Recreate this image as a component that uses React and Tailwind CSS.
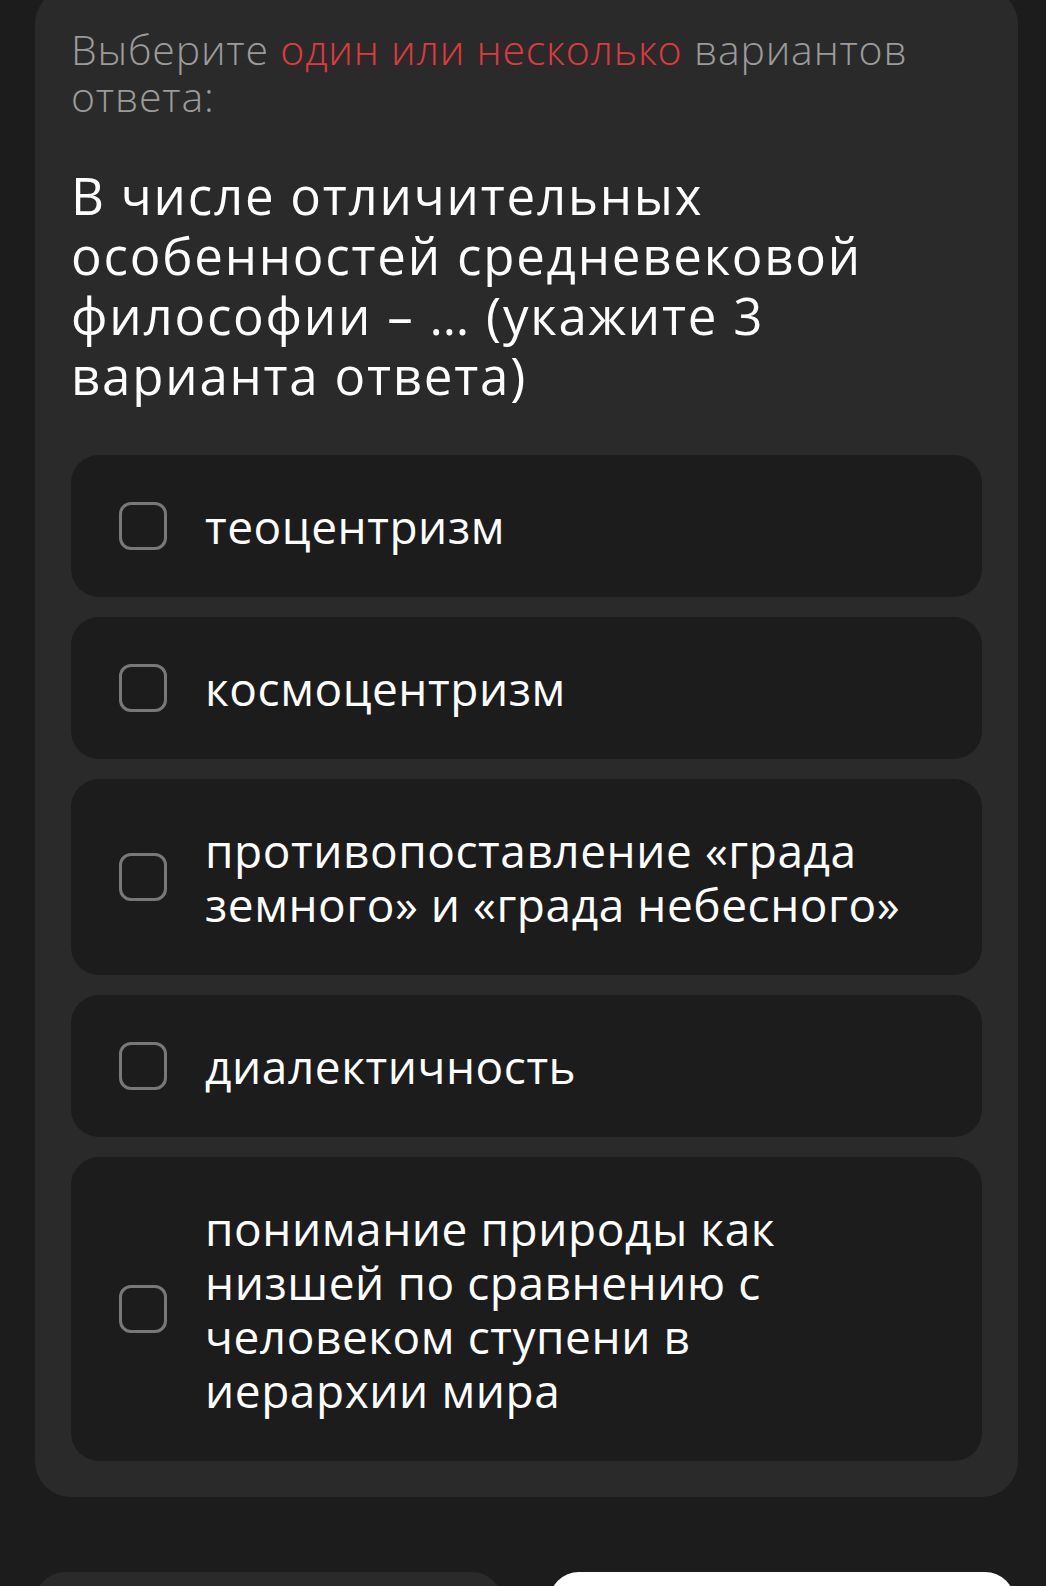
import React from 'react';

const options = [
  'теоцентризм',
  'космоцентризм',
  'противопоставление «града земного» и «града небесного»',
  'диалектичность',
  'понимание природы как низшей по сравнению с человеком ступени в иерархии мира',
];

const Option = ({ text }) => (
  <label className="flex items-center gap-[38px] rounded-[28px] bg-[#1c1c1c] pl-[48px] pr-[76px] py-[44px] cursor-pointer">
    <span className="shrink-0 w-[48px] h-[48px] rounded-[12px] border-[3px] border-[#787878]" />
    <span className="text-[46px] leading-[54px] tracking-[0.012em] text-white">{text}</span>
  </label>
);

export default function App() {
  return (
    <div
      className="min-h-screen bg-[#1c1c1c] overflow-hidden"
      style={{ fontFamily: '"Open Sans", "Noto Sans", sans-serif' }}
    >
      {/* Question card */}
      <div className="ml-[35px] mr-[28px] -mt-[12px] rounded-[36px] bg-[#2a2a2a] px-[36px] pt-[38px] pb-[36px]">
        <p className="text-[41px] leading-[47px] tracking-[0.02em] font-light text-[#9b9b9b]">
          Выберите <span className="text-[#e0393e]">один или несколько</span> вариантов ответа:
        </p>

        <h2 className="mt-[45px] text-[51px] leading-[60px] tracking-[0.035em] font-medium text-white">
          В числе отличительных особенностей средневековой философии – … (укажите 3 варианта ответа)
        </h2>

        <div className="mt-[50px] flex flex-col gap-[20px]">
          {options.map((o) => (
            <Option key={o} text={o} />
          ))}
        </div>
      </div>

      {/* Bottom buttons */}
      <div className="mt-[75px] ml-[35px] mr-[31px] flex gap-[47px]">
        <button className="flex-1 h-[80px] rounded-t-[30px] bg-[#2a2a2a]" />
        <button className="flex-1 h-[80px] rounded-t-[30px] bg-white" />
      </div>
    </div>
  );
}
